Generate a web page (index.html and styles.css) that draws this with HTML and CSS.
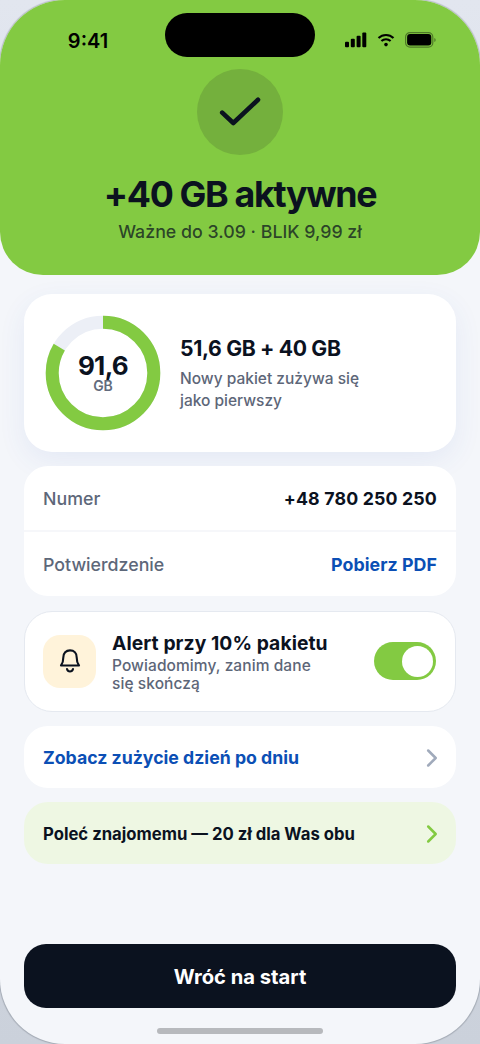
FILE: index.html
```html
<!DOCTYPE html>
<html lang="pl">
<head>
<meta charset="utf-8">
<meta name="viewport" content="width=device-width, initial-scale=1">
<title>Pakiet aktywny</title>
<link rel="stylesheet" href="styles.css">
</head>
<body>
<div class="phone">
  <header class="hero">
    <div class="status">
      <span class="time">9:41</span>
      <span class="island"></span>
      <span class="status-icons">
        <svg width="22" height="16" viewBox="0 0 22 16"><rect x="0" y="9.8" width="4" height="5.4" rx="1"/><rect x="5.8" y="6.8" width="4" height="8.4" rx="1"/><rect x="11.6" y="3.8" width="4" height="11.4" rx="1"/><rect x="17.3" y="0.5" width="4" height="14.7" rx="1"/></svg>
        <svg class="wifi" width="18" height="14" viewBox="0 0 18 14"><path d="M1.5 5.1C5.7.9 12.3.9 16.5 5.1M4.4 8.1c2.6-2.5 6.6-2.5 9.2 0"/><circle cx="9" cy="11.6" r="1.8"/></svg>
        <svg class="battery" width="32" height="16" viewBox="0 0 32 16"><rect class="shell" x=".6" y=".6" width="27.2" height="14.6" rx="4.4"/><rect x="2.1" y="2.1" width="24.2" height="11.4" rx="3"/><path class="cap" d="M29.4 5.9v4c1.6-.7 1.6-3.3 0-4z"/></svg>
      </span>
    </div>
    <div class="check">
      <svg width="44" height="30" viewBox="0 0 44 30"><path d="M4.2 15.6 15.3 26 40 2.8"/></svg>
    </div>
    <h1 class="title">+40 GB aktywne</h1>
    <p class="subtitle">Ważne do 3.09 · BLIK 9,99 zł</p>
  </header>

  <main class="content">
    <section class="card usage">
      <div class="ring">
        <svg class="ring-chart" width="116" height="116" viewBox="0 0 116 116"><circle class="track" cx="58" cy="58" r="50.8"/><circle class="fill" cx="58" cy="58" r="50.8" pathLength="100" stroke-dasharray="83.5 100"/></svg>
        <div class="ring-label"><strong>91,6</strong><span>GB</span></div>
      </div>
      <div class="usage-text">
        <h2>51,6 GB + 40 GB</h2>
        <p>Nowy pakiet zużywa się<br>jako pierwszy</p>
      </div>
    </section>

    <section class="card details">
      <div class="row"><span>Numer</span><strong>+48 780 250 250</strong></div>
      <div class="row"><span>Potwierdzenie</span><a class="pdf">Pobierz PDF</a></div>
    </section>

    <section class="card alert">
      <div class="bell">
        <svg width="24" height="28" viewBox="0 0 24 28"><path d="M3 18.5c1.6-2 2.3-4.2 2.3-8.1 0-4.2 2.7-7 6.700-7s6.700 2.800 6.700 7c0 3.900.7 6.100 2.300 8.100zM9 22c.9 3.300 5.100 3.300 6 0"/></svg>
      </div>
      <div class="alert-text">
        <h3>Alert przy 10% pakietu</h3>
        <p>Powiadomimy, zanim dane<br>się skończą</p>
      </div>
      <div class="toggle"><span class="knob"></span></div>
    </section>

    <a class="card link">
      <span>Zobacz zużycie dzień po dniu</span>
      <svg class="chevron" width="12" height="20" viewBox="0 0 12 20"><path d="M2.2 2.5 9.7 10 2.2 17.5"/></svg>
    </a>
    <a class="card link refer">
      <span>Poleć znajomemu — 20 zł dla Was obu</span>
      <svg class="chevron" width="12" height="20" viewBox="0 0 12 20"><path d="M2.2 2.5 9.7 10 2.2 17.5"/></svg>
    </a>
  </main>

  <footer class="footer">
    <button class="home">Wróć na start</button>
    <div class="home-bar"></div>
  </footer>
</div>
</body>
</html>
```
FILE: styles.css
```css
* { box-sizing: border-box; }
body {
  margin: 0;
  background: linear-gradient(#e2e6ef, #cbd1db);
  font-family: Inter, "Liberation Sans", sans-serif;
  color: #0b121f;
}
h1, h2, h3, p { margin: 0; }
svg { display: block; flex: none; }

.phone {
  display: flex;
  flex-direction: column;
  width: 480px;
  height: 1044px;
  border-radius: 65px;
  overflow: hidden;
  background: #f4f6fa;
  box-shadow: 0 0 1px 1px rgba(11, 18, 31, .2);
}

.hero {
  display: flex;
  flex-direction: column;
  align-items: center;
  height: 275px;
  flex: none;
  background: #83ca42;
  border-radius: 0 0 43px 43px;
}
.status {
  display: grid;
  grid-template-columns: 165px 150px 165px;
  width: 100%;
  height: 69px;
  padding-top: 13px;
}
.time {
  padding: 15px 0 0 11px;
  text-align: center;
  font-size: 20px;
  line-height: 26px;
  font-weight: 600;
  color: #000;
}
.island { height: 44px; border-radius: 22px; background: #000; }
.status-icons {
  display: flex;
  align-items: center;
  height: 54px;
  padding-left: 30px;
  gap: 10px;
}
.wifi path { fill: none; stroke: #000; stroke-width: 2.1; }
.battery .shell { fill: none; stroke: #000; stroke-opacity: .4; stroke-width: 1.2; }
.battery .cap { fill-opacity: .45; }
.check {
  display: flex;
  align-items: center;
  justify-content: center;
  width: 86px;
  height: 86px;
  border-radius: 50%;
  background: #74b03d;
}
.check path {
  fill: none;
  stroke: #0b121f;
  stroke-width: 4.6;
  stroke-linecap: round;
  stroke-linejoin: round;
}
.title {
  margin-top: 18px;
  font-size: 35.8px;
  line-height: 42px;
  font-weight: 700;
  letter-spacing: -1.35px;
}
.subtitle {
  margin-top: 5px;
  font-size: 17.8px;
  line-height: 24px;
  font-weight: 500;
  color: rgba(11, 18, 31, .74);
}

.content {
  display: flex;
  flex-direction: column;
  gap: 14.5px;
  padding: 19px 24px 0;
}
.card { background: #fff; border-radius: 24px; }
.usage {
  display: flex;
  align-items: center;
  gap: 19px;
  height: 157.5px;
  padding: 0 21px;
  border-radius: 28px;
  box-shadow: 0 9px 28px rgba(50, 90, 190, .08);
}
.ring { display: grid; place-items: center; }
.ring > * { grid-area: 1 / 1; }
.ring-chart { transform: rotate(-90deg); }
.ring-chart circle { fill: none; stroke-width: 13; }
.track { stroke: #eceff6; }
.fill { stroke: #83ca42; }
.ring-label { text-align: center; }
.ring-label strong {
  display: block;
  font-size: 26px;
  line-height: 27px;
  font-weight: 700;
  letter-spacing: -.7px;
}
.ring-label span {
  display: block;
  font-size: 14px;
  line-height: 14px;
  font-weight: 600;
  color: #626b7c;
}
.usage-text { padding-top: 2px; }
.usage-text h2 {
  font-size: 21.2px;
  line-height: 26px;
  font-weight: 700;
  letter-spacing: -.35px;
}
.usage-text p {
  margin-top: 7px;
  font-size: 15.5px;
  line-height: 22px;
  font-weight: 500;
  color: #5d6678;
}

.details { height: 130px; }
.row {
  display: flex;
  align-items: center;
  justify-content: space-between;
  height: 64px;
  padding: 1px 19px 0;
  font-size: 17.8px;
  font-weight: 500;
  color: #5d6779;
}
.row + .row { height: 66px; padding-top: 1px; border-top: 2px solid #f6f7fa; }
.row strong, .row .pdf { font-weight: 700; color: #0b121f; }
.row strong { letter-spacing: .15px; }
.row .pdf { color: #0b4fb5; letter-spacing: .05px; }

.alert {
  display: flex;
  align-items: center;
  height: 101px;
  padding: 0 19px 0 18px;
  border: 1.5px solid #e5e9f0;
  border-radius: 28px;
}
.bell {
  display: flex;
  align-items: center;
  justify-content: center;
  width: 53px;
  height: 53px;
  border-radius: 17px;
  background: #fff3da;
}
.bell path {
  fill: none;
  stroke: #0b121f;
  stroke-width: 2.1;
  stroke-linecap: round;
  stroke-linejoin: round;
}
.alert-text { flex: 1; padding: 1px 0 0 16px; }
.alert-text h3 { font-size: 19.3px; line-height: 24px; font-weight: 700; letter-spacing: .07px; }
.alert-text p {
  font-size: 15.5px;
  line-height: 18px;
  margin-top: 2px;
  font-weight: 500;
  letter-spacing: .08px;
  color: #5d6678;
}
.toggle {
  display: flex;
  justify-content: flex-end;
  width: 62px;
  height: 38px;
  padding: 3.5px;
  border-radius: 19px;
  background: #83ca42;
}
.knob { width: 31px; height: 31px; border-radius: 50%; background: #fff; }

.link {
  display: flex;
  align-items: center;
  justify-content: space-between;
  height: 61.5px;
  padding: 2px 18px 0 19px;
  font-size: 17.7px;
  font-weight: 700;
  color: #0b4fb5;
}
.chevron path {
  fill: none;
  stroke: #a0aabb;
  stroke-width: 2.5;
  stroke-linecap: round;
  stroke-linejoin: round;
}
.refer { background: #eef7e3; color: #0b121f; font-size: 16.7px; }
.refer .chevron path { stroke: #83ca42; }

.footer {
  display: flex;
  flex-direction: column;
  align-items: center;
  margin-top: auto;
  padding: 0 24px 10px;
}
.home {
  width: 100%;
  height: 64px;
  padding: 2px 0 0;
  border: 0;
  border-radius: 22px;
  background: #0b121f;
  color: #fff;
  font: 700 20.2px/26px Inter, "Liberation Sans", sans-serif;
}
.home-bar {
  width: 166px;
  height: 6px;
  margin-top: 20px;
  border-radius: 3px;
  background: #b7b9bd;
}
```
